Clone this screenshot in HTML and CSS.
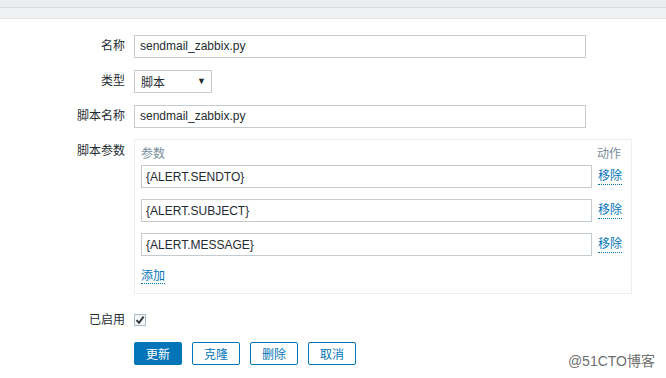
FILE: index.html
```html
<!DOCTYPE html>
<html lang="zh">
  <head>
    <meta charset="UTF-8" />
    <title>报警媒介类型</title>
    <link rel="stylesheet" href="styles.css">
  </head>
  <body>
    <div class="header">
      <div class="header-top"></div>
      <div class="header-bottom"></div>
    </div>

    <form class="form-media">
      <div class="form-row">
        <label class="form-label">名称</label>
        <input class="form-input" type="text" value="sendmail_zabbix.py" />
      </div>

      <div class="form-row">
        <label class="form-label">类型</label>
        <div class="form-select">
          <span>脚本</span>
          <span class="form-select-arrow">&#9660;</span>
        </div>
      </div>

      <div class="form-row">
        <label class="form-label">脚本名称</label>
        <input class="form-input" type="text" value="sendmail_zabbix.py" />
      </div>

      <div class="form-row form-row-top">
        <label class="form-label">脚本参数</label>
        <div class="params">
          <div class="params-head">
            <span>参数</span>
            <span>动作</span>
          </div>
          <div class="params-row">
            <input class="params-input" type="text" value="{ALERT.SENDTO}" />
            <a class="link" href="#">移除</a>
          </div>
          <div class="params-row">
            <input class="params-input" type="text" value="{ALERT.SUBJECT}" />
            <a class="link" href="#">移除</a>
          </div>
          <div class="params-row">
            <input class="params-input" type="text" value="{ALERT.MESSAGE}" />
            <a class="link" href="#">移除</a>
          </div>
          <div class="params-add">
            <a class="link" href="#">添加</a>
          </div>
        </div>
      </div>

      <div class="form-row form-row-check">
        <label class="form-label">已启用</label>
        <span class="checkbox">
          <svg width="10" height="10" viewBox="0 0 10 10">
            <path d="M1.5 5.2 L4 7.8 L8.6 1.6" fill="none" stroke="#2b3338" stroke-width="1.8" />
          </svg>
        </span>
      </div>

      <div class="form-buttons">
        <button class="btn btn-main" type="button">更新</button>
        <button class="btn" type="button">克隆</button>
        <button class="btn" type="button">删除</button>
        <button class="btn" type="button">取消</button>
      </div>
    </form>

    <div class="watermark">@51CTO博客</div>
  </body>
</html>
```

FILE: styles.css
```css
* {
  margin: 0;
  padding: 0;
  box-sizing: border-box;
  font-family: "Liberation Sans", "Noto Sans CJK SC", sans-serif;
}

body {
  width: 666px;
  height: 378px;
  color: #1f2c33;
  font-size: 12px;
  background: white;
  position: relative;
  overflow: hidden;
}

.header-top {
  height: 8px;
  background: #ebeef1;
  border-bottom: 1px solid #d6dde1;
}

.header-bottom {
  height: 11px;
  background: #eef1f3;
  border-bottom: 1px solid #e4e4e4;
}

.form-media {
  padding-top: 15px;
}

.form-row {
  display: flex;
  align-items: center;
  margin-bottom: 11px;
}

.form-row-top {
  align-items: flex-start;
  margin-bottom: 14px;
}

.form-label {
  width: 125px;
  margin-right: 9px;
  text-align: right;
  line-height: 23px;
  padding-top: 1px;
}

.form-input {
  width: 452px;
  height: 23px;
  border: 1px solid #c4cbcf;
  padding: 0 5px;
  font-size: 12px;
  color: #1f2c33;
}

.form-select {
  width: 78px;
  height: 23px;
  border: 1px solid #c4cbcf;
  padding: 0 5px 0 6px;
  display: flex;
  align-items: center;
  justify-content: space-between;
}

.form-select-arrow {
  font-size: 9px;
  color: #1f2c33;
}

.params {
  width: 498px;
  height: 155px;
  border: 1px solid #eceff1;
  padding: 6px 9px 0 6px;
}

.params-head {
  display: flex;
  justify-content: space-between;
  color: #768d99;
  line-height: 16px;
  margin-bottom: 3px;
  padding-right: 1px;
}

.params-row {
  display: flex;
  align-items: center;
  margin-bottom: 11px;
}

.params-input {
  width: 451px;
  height: 23px;
  border: 1px solid #c4cbcf;
  padding: 0 4px;
  font-size: 12px;
  color: #1f2c33;
  margin-right: 6px;
  flex-shrink: 0;
}

.params-add {
  padding-top: 2px;
}

.link {
  color: #0275b8;
  text-decoration: none;
  border-bottom: 1px dotted #0275b8;
  line-height: 15px;
  white-space: nowrap;
}

.form-row-check {
  margin-bottom: 10px;
}

.checkbox {
  width: 12px;
  height: 12px;
  border: 1px solid #acbbc2;
  background: #f4f6f7;
  display: flex;
  align-items: center;
  justify-content: center;
}

.form-buttons {
  display: flex;
  gap: 10px;
  margin-left: 134px;
}

.btn {
  width: 48px;
  height: 23px;
  border: 1px solid #0275b8;
  border-radius: 2px;
  background: white;
  color: #0275b8;
  font-size: 12px;
}

.btn-main {
  background: #0275b8;
  color: white;
}

.watermark {
  position: absolute;
  right: 11px;
  bottom: 8px;
  font-size: 14px;
  color: #6f6f6f;
}
```
